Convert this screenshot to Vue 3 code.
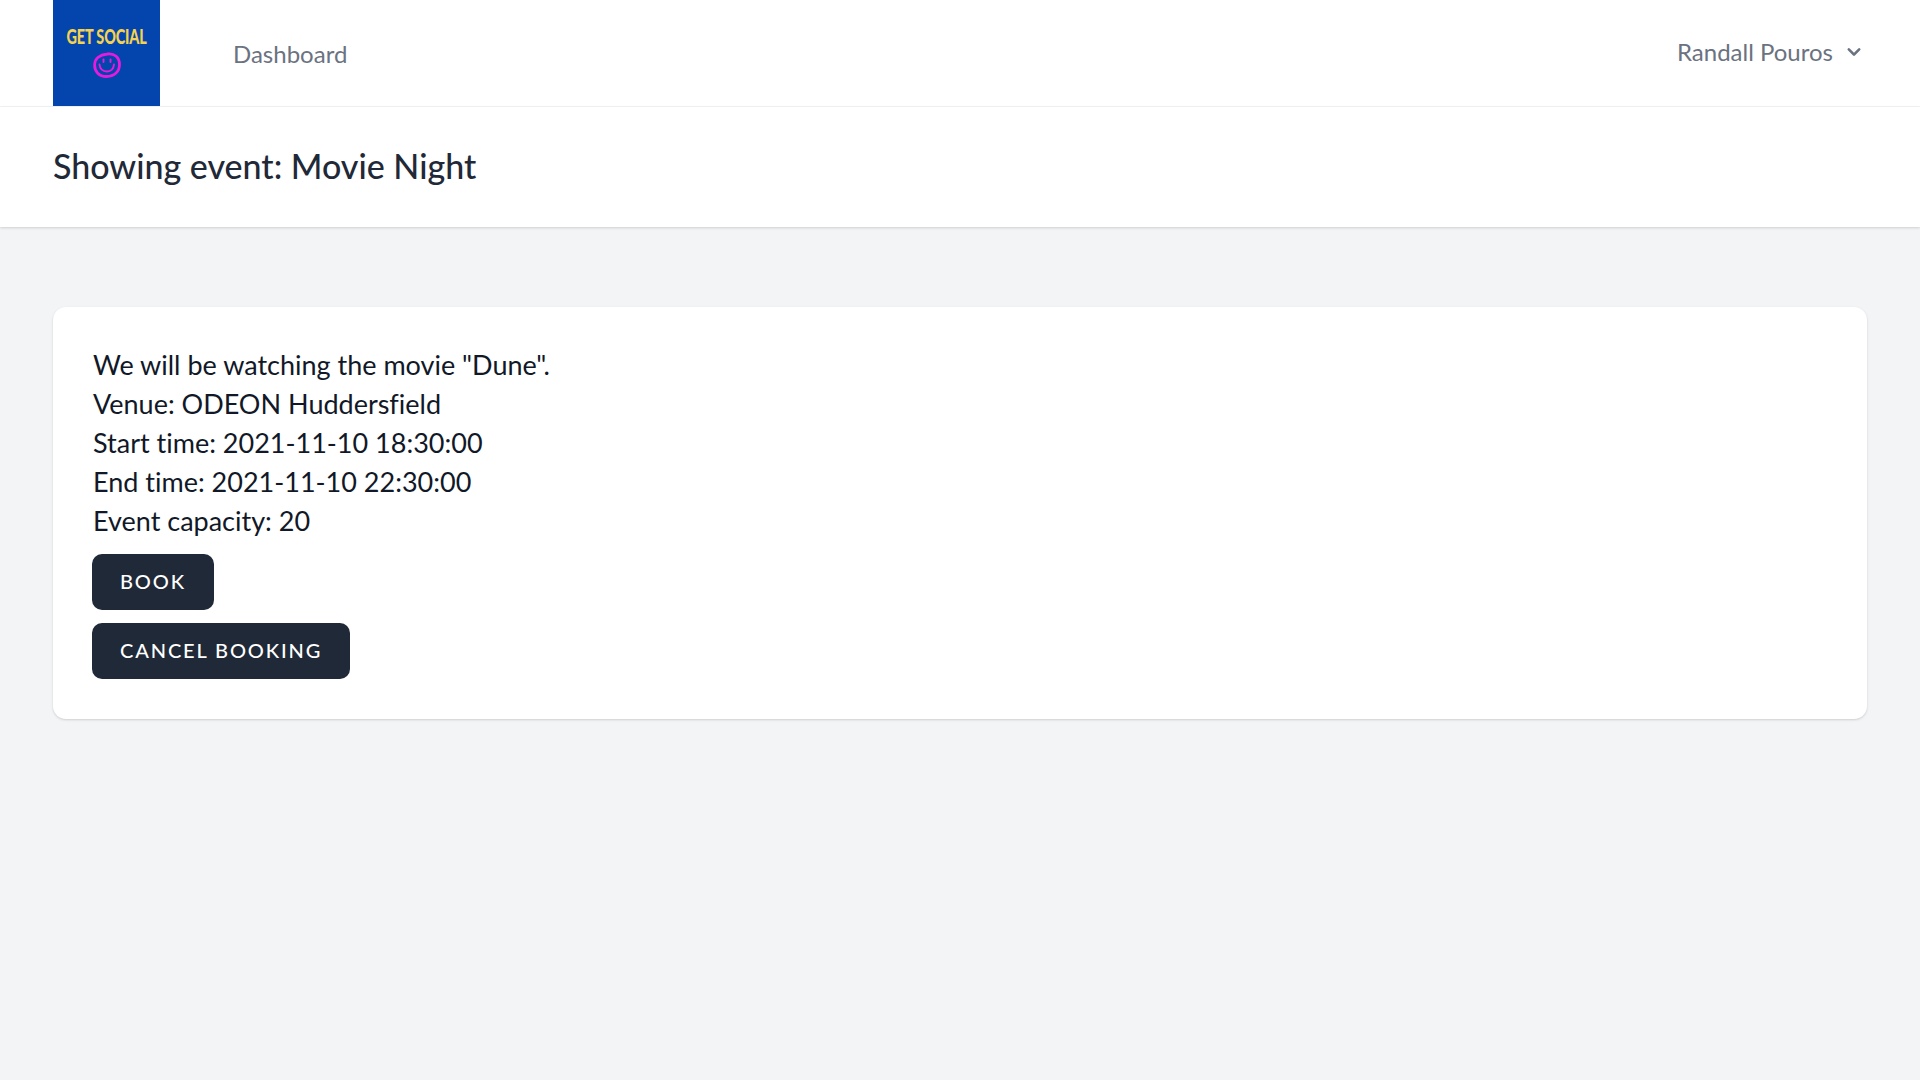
<template>
  <div class="page">
    <nav class="nav">
      <div class="nav-left">
        <div class="logo">
          <span class="logo-text">GET SOCIAL</span>
          <svg class="smiley" width="28" height="26" viewBox="0 0 28 26" fill="none" stroke="#e81ae0" stroke-linecap="round">
            <path d="M14 2C21 0.8 26.5 5 26.5 12.5C26.5 20 21 24.5 13.5 24.5C6 24.5 1.6 19.5 1.6 13C1.6 6.5 7 2.6 14 2Z" stroke-width="2.8" />
            <path d="M6.5 12.5C7 17.5 10 19.5 14 19.5C18 19.5 20.5 17 21 12.5" stroke-width="1.9" />
            <path d="M10.5 7.5V10" stroke-width="1.9" />
            <path d="M17.5 7.5V10" stroke-width="1.9" />
          </svg>
        </div>
        <a class="nav-link">Dashboard</a>
      </div>
      <button class="user">
        <span>Randall Pouros</span>
        <svg width="26" height="26" viewBox="0 0 20 20" fill="#6b7280">
          <path fill-rule="evenodd" clip-rule="evenodd" d="M5.293 7.293a1 1 0 011.414 0L10 10.586l3.293-3.293a1 1 0 111.414 1.414l-4 4a1 1 0 01-1.414 0l-4-4a1 1 0 010-1.414z" />
        </svg>
      </button>
    </nav>

    <header class="header">
      <h2>Showing event: {{ event.name }}</h2>
    </header>

    <main class="main">
      <div class="card">
        <p>{{ event.description }}</p>
        <p>Venue: {{ event.venue }}</p>
        <p>Start time: {{ event.start }}</p>
        <p>End time: {{ event.end }}</p>
        <p>Event capacity: {{ event.capacity }}</p>
        <div class="actions">
          <button class="btn">Book</button>
          <button class="btn">Cancel booking</button>
        </div>
      </div>
    </main>
  </div>
</template>

<script setup>
const event = {
  name: 'Movie Night',
  description: 'We will be watching the movie "Dune".',
  venue: 'ODEON Huddersfield',
  start: '2021-11-10 18:30:00',
  end: '2021-11-10 22:30:00',
  capacity: 20
}
</script>

<style>
body {
  margin: 0;
  background: #f3f4f6;
}
</style>

<style scoped>
.page {
  min-height: 1080px;
  background: #f3f4f6;
  font-family: "Lato", "Noto Sans", sans-serif;
  font-variant-ligatures: none;
  color: #1f2937;
}

.nav {
  display: flex;
  justify-content: space-between;
  align-items: center;
  height: 106px;
  padding: 0 53px;
  background: #fff;
  border-bottom: 1px solid #f3f4f6;
}

.nav-left {
  display: flex;
  align-items: center;
  gap: 73px;
}

.logo {
  display: flex;
  flex-direction: column;
  align-items: center;
  justify-content: center;
  gap: 6px;
  width: 107px;
  height: 106px;
  padding-bottom: 3px;
  box-sizing: border-box;
  background: #0445ad;
}

.logo-text {
  display: inline-block;
  font-size: 20px;
  font-weight: 900;
  line-height: 20px;
  letter-spacing: -0.2px;
  color: #f6d24f;
  white-space: nowrap;
  transform: scaleX(0.72);
}

.nav-link {
  font-size: 24px;
  color: #6b7280;
}

.user {
  display: flex;
  align-items: center;
  gap: 8px;
  padding: 0 0 3px;
  border: none;
  background: none;
  font: inherit;
  font-size: 24px;
  color: #6b7280;
}

.header {
  background: #fff;
  padding: 29px 53px 31px;
  box-shadow: 0 1px 3px rgba(0, 0, 0, 0.1), 0 1px 2px rgba(0, 0, 0, 0.06);
}

.header h2 {
  margin: 0;
  font-size: 34px;
  font-weight: 500;
  line-height: 60px;
}

.main {
  padding: 80px 53px;
}

.card {
  padding: 38px 39px 40px;
  background: #fff;
  border-radius: 13px;
  box-shadow: 0 1px 3px rgba(0, 0, 0, 0.1), 0 1px 2px rgba(0, 0, 0, 0.06);
  font-size: 27px;
  line-height: 39px;
  color: #111827;
}

.card p {
  margin: 0;
  padding-left: 1px;
}

.actions {
  display: flex;
  flex-direction: column;
  align-items: flex-start;
  gap: 13px;
  margin-top: 14px;
}

.btn {
  height: 56px;
  padding: 0 28px 2px;
  border: none;
  border-radius: 10px;
  background: #1f2937;
  color: #fff;
  font: inherit;
  font-size: 20px;
  font-weight: 500;
  letter-spacing: 1.88px;
  text-transform: uppercase;
}
</style>
